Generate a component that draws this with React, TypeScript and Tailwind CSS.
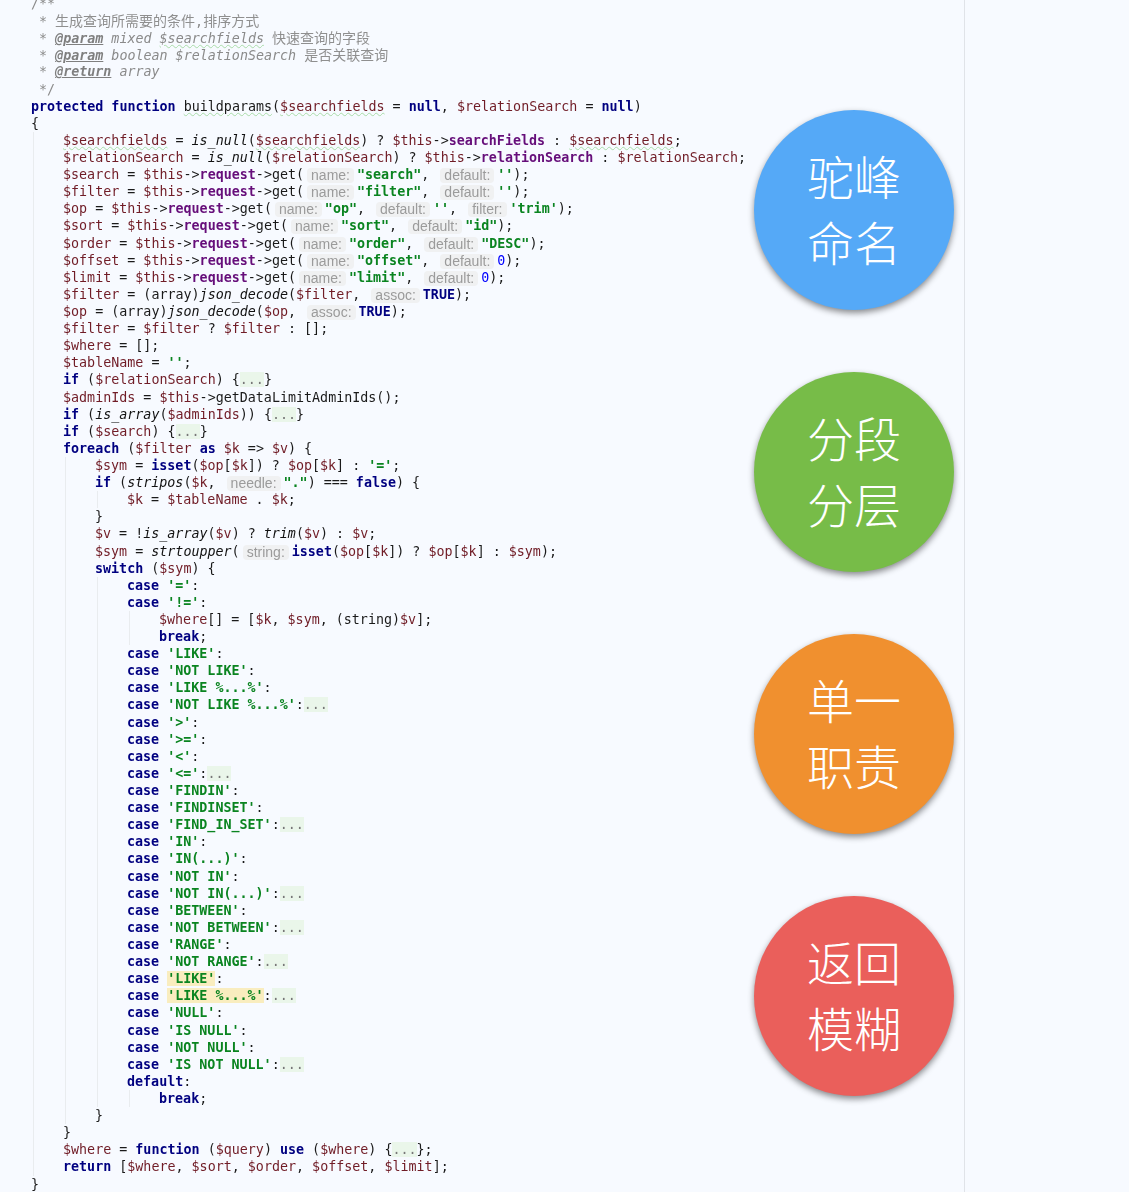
import React from "react";

// «x:text» marks a token, anything else is plain code
const code: string[] = [
  "«c:/**»",
  "«c: * »«z:生成查询所需要的条件»«c:,»«z:排序方式»",
  "«c: * »«t:@param»«d: mixed »«q:$searchfields»«c: »«z:快速查询的字段»",
  "«c: * »«t:@param»«d: boolean $relationSearch »«z:是否关联查询»",
  "«c: * »«t:@return»«d: array»",
  "«c: */»",
  "«k:protected» «k:function» «w:buildparams»(«w:$searchfields» = «k:null», $relationSearch = «k:null»)",
  "{",
  "    «w:$searchfields» = «i:is_null»(«w:$searchfields») ? $this->«f:searchFields» : «w:$searchfields»;",
  "    $relationSearch = «i:is_null»($relationSearch) ? $this->«f:relationSearch» : $relationSearch;",
  '    $search = $this->«f:request»->get(«h:name:»«s:"search"», «h:default:»«s:\'\'»);',
  '    $filter = $this->«f:request»->get(«h:name:»«s:"filter"», «h:default:»«s:\'\'»);',
  '    $op = $this->«f:request»->get(«h:name:»«s:"op"», «h:default:»«s:\'\'», «h:filter:»«s:\'trim\'»);',
  '    $sort = $this->«f:request»->get(«h:name:»«s:"sort"», «h:default:»«s:"id"»);',
  '    $order = $this->«f:request»->get(«h:name:»«s:"order"», «h:default:»«s:"DESC"»);',
  '    $offset = $this->«f:request»->get(«h:name:»«s:"offset"», «h:default:»«n:0»);',
  '    $limit = $this->«f:request»->get(«h:name:»«s:"limit"», «h:default:»«n:0»);',
  "    $filter = (array)«i:json_decode»($filter, «h:assoc:»«k:TRUE»);",
  "    $op = (array)«i:json_decode»($op, «h:assoc:»«k:TRUE»);",
  "    $filter = $filter ? $filter : [];",
  "    $where = [];",
  "    $tableName = «s:''»;",
  "    «k:if» ($relationSearch) {«o:...»}",
  "    $adminIds = $this->getDataLimitAdminIds();",
  "    «k:if» («i:is_array»($adminIds)) {«o:...»}",
  "    «k:if» ($search) {«o:...»}",
  "    «k:foreach» ($filter «k:as» $k => $v) {",
  "        $sym = «k:isset»($op[$k]) ? $op[$k] : «s:'='»;",
  '        «k:if» («i:stripos»($k, «h:needle:»«s:"."») === «k:false») {',
  "            $k = $tableName . $k;",
  "        }",
  "        $v = !«i:is_array»($v) ? «i:trim»($v) : $v;",
  "        $sym = «i:strtoupper»(«h:string:»«k:isset»($op[$k]) ? $op[$k] : $sym);",
  "        «k:switch» ($sym) {",
  "            «k:case» «s:'='»:",
  "            «k:case» «s:'!='»:",
  "                $where[] = [$k, $sym, (string)$v];",
  "                «k:break»;",
  "            «k:case» «s:'LIKE'»:",
  "            «k:case» «s:'NOT LIKE'»:",
  "            «k:case» «s:'LIKE %...%'»:",
  "            «k:case» «s:'NOT LIKE %...%'»:«o:...»",
  "            «k:case» «s:'>'»:",
  "            «k:case» «s:'>='»:",
  "            «k:case» «s:'<'»:",
  "            «k:case» «s:'<='»:«o:...»",
  "            «k:case» «s:'FINDIN'»:",
  "            «k:case» «s:'FINDINSET'»:",
  "            «k:case» «s:'FIND_IN_SET'»:«o:...»",
  "            «k:case» «s:'IN'»:",
  "            «k:case» «s:'IN(...)'»:",
  "            «k:case» «s:'NOT IN'»:",
  "            «k:case» «s:'NOT IN(...)'»:«o:...»",
  "            «k:case» «s:'BETWEEN'»:",
  "            «k:case» «s:'NOT BETWEEN'»:«o:...»",
  "            «k:case» «s:'RANGE'»:",
  "            «k:case» «s:'NOT RANGE'»:«o:...»",
  "            «k:case» «y:'LIKE'»:",
  "            «k:case» «y:'LIKE %...%'»:«o:...»",
  "            «k:case» «s:'NULL'»:",
  "            «k:case» «s:'IS NULL'»:",
  "            «k:case» «s:'NOT NULL'»:",
  "            «k:case» «s:'IS NOT NULL'»:«o:...»",
  "            «k:default»:",
  "                «k:break»;",
  "        }",
  "    }",
  "    $where = «k:function» ($query) «k:use» ($where) {«o:...»};",
  "    «k:return» [$where, $sort, $order, $offset, $limit];",
  "}",
];

const tokenClass: Record<string, string> = {
  c: "text-[#8a8a8a]",
  d: "text-[#8a8a8a] italic",
  t: "text-[#7f7f7f] italic font-bold underline",
  z: "text-[#8f8f8f] text-[14px] font-['Noto_Sans_CJK_SC',sans-serif]",
  q: "text-[#8a8a8a] italic underline decoration-wavy decoration-[#a9dca9] decoration-1",
  k: "text-[#000080] font-bold",
  s: "text-[#0a8420] font-bold",
  f: "text-[#660e7a] font-bold",
  i: "text-[#111] italic",
  n: "text-[#0000ff]",
  o: "bg-[#eaf6ea] text-[#777]",
  y: "text-[#0a8420] font-bold bg-[#f9edbf]",
};

const wavy = "underline decoration-wavy decoration-[#a9dca9] decoration-1";

function Vars({ text, className }: { text: string; className?: string }) {
  // $variables get the dark red colour
  const parts = text.split(/(\$\w+)/);
  return (
    <>
      {parts.map((p, i) =>
        p.startsWith("$") ? (
          <span key={i} className={`text-[#701c26] ${className ?? ""}`}>
            {p}
          </span>
        ) : p ? (
          <span key={i} className={className}>
            {p}
          </span>
        ) : null,
      )}
    </>
  );
}

function Hint({ label }: { label: string }) {
  return (
    <span className="inline-block ml-[3px] mr-[3px] px-[4px] h-[15px] leading-[14px] rounded-[4px] bg-[#f0f1f2] text-[#9b9b9b] text-[14px] font-['Liberation_Sans',sans-serif] align-[-1px]">
      {label}
    </span>
  );
}

function Line({ source }: { source: string }) {
  const isDoc = source.startsWith("«c:");
  const indent = isDoc ? 0 : (source.match(/^ */)?.[0].length ?? 0) / 4;
  const body = isDoc ? source : source.trimStart();
  const nodes: React.ReactNode[] = [];
  const re = /«(\w):([^»]*)»/g;
  let last = 0;
  let m: RegExpExecArray | null;
  while ((m = re.exec(body))) {
    if (m.index > last) nodes.push(<Vars key={last} text={body.slice(last, m.index)} />);
    const [, type, text] = m;
    if (type === "h") nodes.push(<Hint key={m.index} label={text} />);
    else if (type === "w") nodes.push(<Vars key={m.index} text={text} className={wavy} />);
    else nodes.push(<span key={m.index} className={tokenClass[type]}>{text}</span>);
    last = m.index + m[0].length;
  }
  if (last < body.length) nodes.push(<Vars key={last} text={body.slice(last)} />);

  return (
    <div className="flex h-[17.11px] leading-[17.11px] whitespace-pre">
      {Array.from({ length: indent }).map((_, i) => (
        <span key={i} className="w-[30px] ml-[2px] shrink-0 border-l border-[#e9ecef]" />
      ))}
      <span>{nodes}</span>
    </div>
  );
}

function Bubble({ top, bottom, color }: { top: string; bottom: string; color: string }) {
  return (
    <div
      className={`w-[200px] h-[200px] pb-[4px] rounded-full flex flex-col items-center justify-center text-white text-[47px] leading-[66px] font-['Noto_Sans_CJK_SC',sans-serif] font-light shadow-[0_3px_6px_rgba(0,0,0,0.45)] ${color}`}
    >
      <span>{top}</span>
      <span>{bottom}</span>
    </div>
  );
}

export default function App() {
  return (
    <div className="relative w-[1134px] h-[1192px] overflow-hidden bg-white">
      <div className="flex w-[1129px] h-full bg-[#f7faff]">
        <div className="w-[965px] h-full shrink-0 border-r border-[#e0e3e8] pl-[31px] overflow-hidden">
          <div className="-mt-[5px] text-[13.35px] text-[#1a1a1a] font-['DejaVu_Sans_Mono',monospace] blur-[0.4px]">
            {code.map((l, i) => (
              <Line key={i} source={l} />
            ))}
          </div>
        </div>
      </div>
      <div className="absolute left-[754px] top-[110px] flex flex-col gap-[62px]">
        <Bubble top="驼峰" bottom="命名" color="bg-[#55a9f7]" />
        <Bubble top="分段" bottom="分层" color="bg-[#77bc48]" />
        <Bubble top="单一" bottom="职责" color="bg-[#f0902f]" />
        <Bubble top="返回" bottom="模糊" color="bg-[#ea5f5b]" />
      </div>
    </div>
  );
}
